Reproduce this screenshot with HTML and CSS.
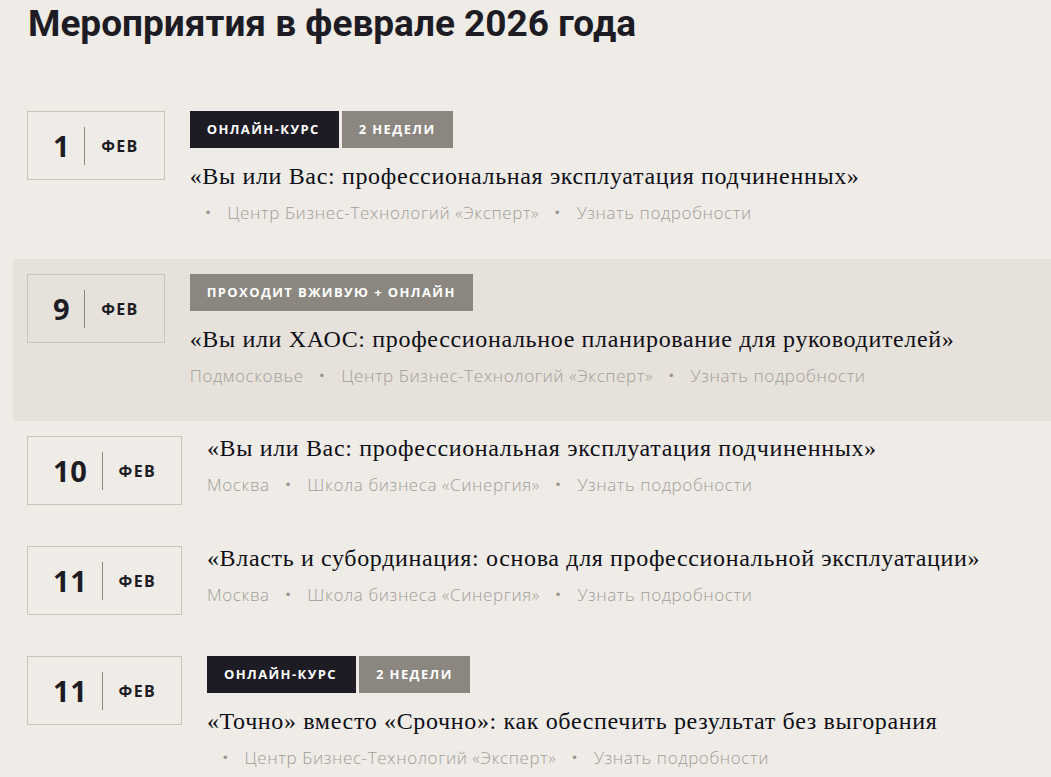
FILE: index.html
```html
<!DOCTYPE html>
<html lang="ru">
<head>
  <meta charset="UTF-8" />
  <meta name="viewport" content="width=device-width, initial-scale=1.0"/>
  <title>Мероприятия</title>
  <link rel="stylesheet" href="styles.css">
</head>
<body>

<h1 class="page-title">Мероприятия в феврале 2026 года</h1>

<div class="events">

  <div class="event">
    <div class="date"><span class="day">1</span><span class="sep"></span><span class="month">ФЕВ</span></div>
    <div class="info">
      <div class="tags"><span class="tag dark">Онлайн-курс</span><span class="tag">2 недели</span></div>
      <div class="title">«Вы или Вас: профессиональная эксплуатация подчиненных»</div>
      <div class="meta"><span></span><i>•</i><span>Центр Бизнес-Технологий «Эксперт»</span><i>•</i><a href="#">Узнать подробности</a></div>
    </div>
  </div>

  <div class="event active">
    <div class="date"><span class="day">9</span><span class="sep"></span><span class="month">ФЕВ</span></div>
    <div class="info">
      <div class="tags"><span class="tag">Проходит вживую + онлайн</span></div>
      <div class="title">«Вы или ХАОС: профессиональное планирование для руководителей»</div>
      <div class="meta"><span>Подмосковье</span><i>•</i><span>Центр Бизнес-Технологий «Эксперт»</span><i>•</i><a href="#">Узнать подробности</a></div>
    </div>
  </div>

  <div class="event">
    <div class="date"><span class="day">10</span><span class="sep"></span><span class="month">ФЕВ</span></div>
    <div class="info">
      <div class="title">«Вы или Вас: профессиональная эксплуатация подчиненных»</div>
      <div class="meta"><span>Москва</span><i>•</i><span>Школа бизнеса «Синергия»</span><i>•</i><a href="#">Узнать подробности</a></div>
    </div>
  </div>

  <div class="event">
    <div class="date"><span class="day">11</span><span class="sep"></span><span class="month">ФЕВ</span></div>
    <div class="info">
      <div class="title">«Власть и субординация: основа для профессиональной эксплуатации»</div>
      <div class="meta"><span>Москва</span><i>•</i><span>Школа бизнеса «Синергия»</span><i>•</i><a href="#">Узнать подробности</a></div>
    </div>
  </div>

  <div class="event">
    <div class="date"><span class="day">11</span><span class="sep"></span><span class="month">ФЕВ</span></div>
    <div class="info">
      <div class="tags"><span class="tag dark">Онлайн-курс</span><span class="tag">2 недели</span></div>
      <div class="title">«Точно» вместо «Срочно»: как обеспечить результат без выгорания</div>
      <div class="meta"><span></span><i>•</i><span>Центр Бизнес-Технологий «Эксперт»</span><i>•</i><a href="#">Узнать подробности</a></div>
    </div>
  </div>

</div>

</body>
</html>
```

FILE: styles.css
```css
body {
  margin: 0;
  background: #efece7;
  font-family: "Open Sans", sans-serif;
  color: #1d1c24;
}

.page-title {
  margin: 0 0 0 28px;
  padding-top: 2px;
  height: 94px;
  font-family: Roboto, sans-serif;
  font-weight: 700;
  font-size: 37px;
  line-height: 44px;
  color: #1d1c24;
}

.events {
  padding-left: 13px;
}

.event {
  display: flex;
  align-items: flex-start;
  padding: 15px 14px 26px;
}

.event:first-child {
  padding-bottom: 27px;
}

.event.active {
  background: #e6e2db;
}

.date {
  display: flex;
  align-items: center;
  height: 67px;
  padding: 0 25px;
  border: 1px solid #cbc5b6;
  flex: 0 0 auto;
}

.day {
  font-weight: 700;
  font-size: 29px;
  letter-spacing: 0.7px;
  line-height: 1;
}

.sep {
  width: 1px;
  height: 38px;
  background: #8d877c;
  margin: 0 16px 0 14px;
}

.month {
  font-weight: 700;
  font-size: 16px;
  letter-spacing: 1.3px;
}

.info {
  margin-left: 25px;
}

.tags {
  display: flex;
  gap: 3px;
  margin-bottom: 16px;
}

.tag {
  display: inline-block;
  height: 37px;
  line-height: 37px;
  padding: 0 17px;
  background: #8b8780;
  color: #fff;
  font-weight: 700;
  font-size: 13px;
  letter-spacing: 1.4px;
  text-transform: uppercase;
}

.tag.dark {
  background: #1d1c24;
  padding: 0 19px 0 17px;
}

.title {
  font-family: "Liberation Serif", serif;
  font-size: 24px;
  letter-spacing: 0.65px;
  line-height: 24px;
  color: #0e0e16;
  margin-bottom: 13px;
}

.meta {
  display: flex;
  align-items: center;
  font-size: 17px;
  font-weight: 300;
  letter-spacing: 0.6px;
  line-height: 24px;
  color: #a19d97;
  margin-bottom: 7px;
}

.meta i {
  font-family: "DejaVu Sans", sans-serif;
  font-style: normal;
  margin: 0 17px 0 16px;
  font-size: 13px;
  letter-spacing: 0;
  color: #99958f;
}

.meta a {
  color: #a19d97;
  text-decoration: none;
}
```
